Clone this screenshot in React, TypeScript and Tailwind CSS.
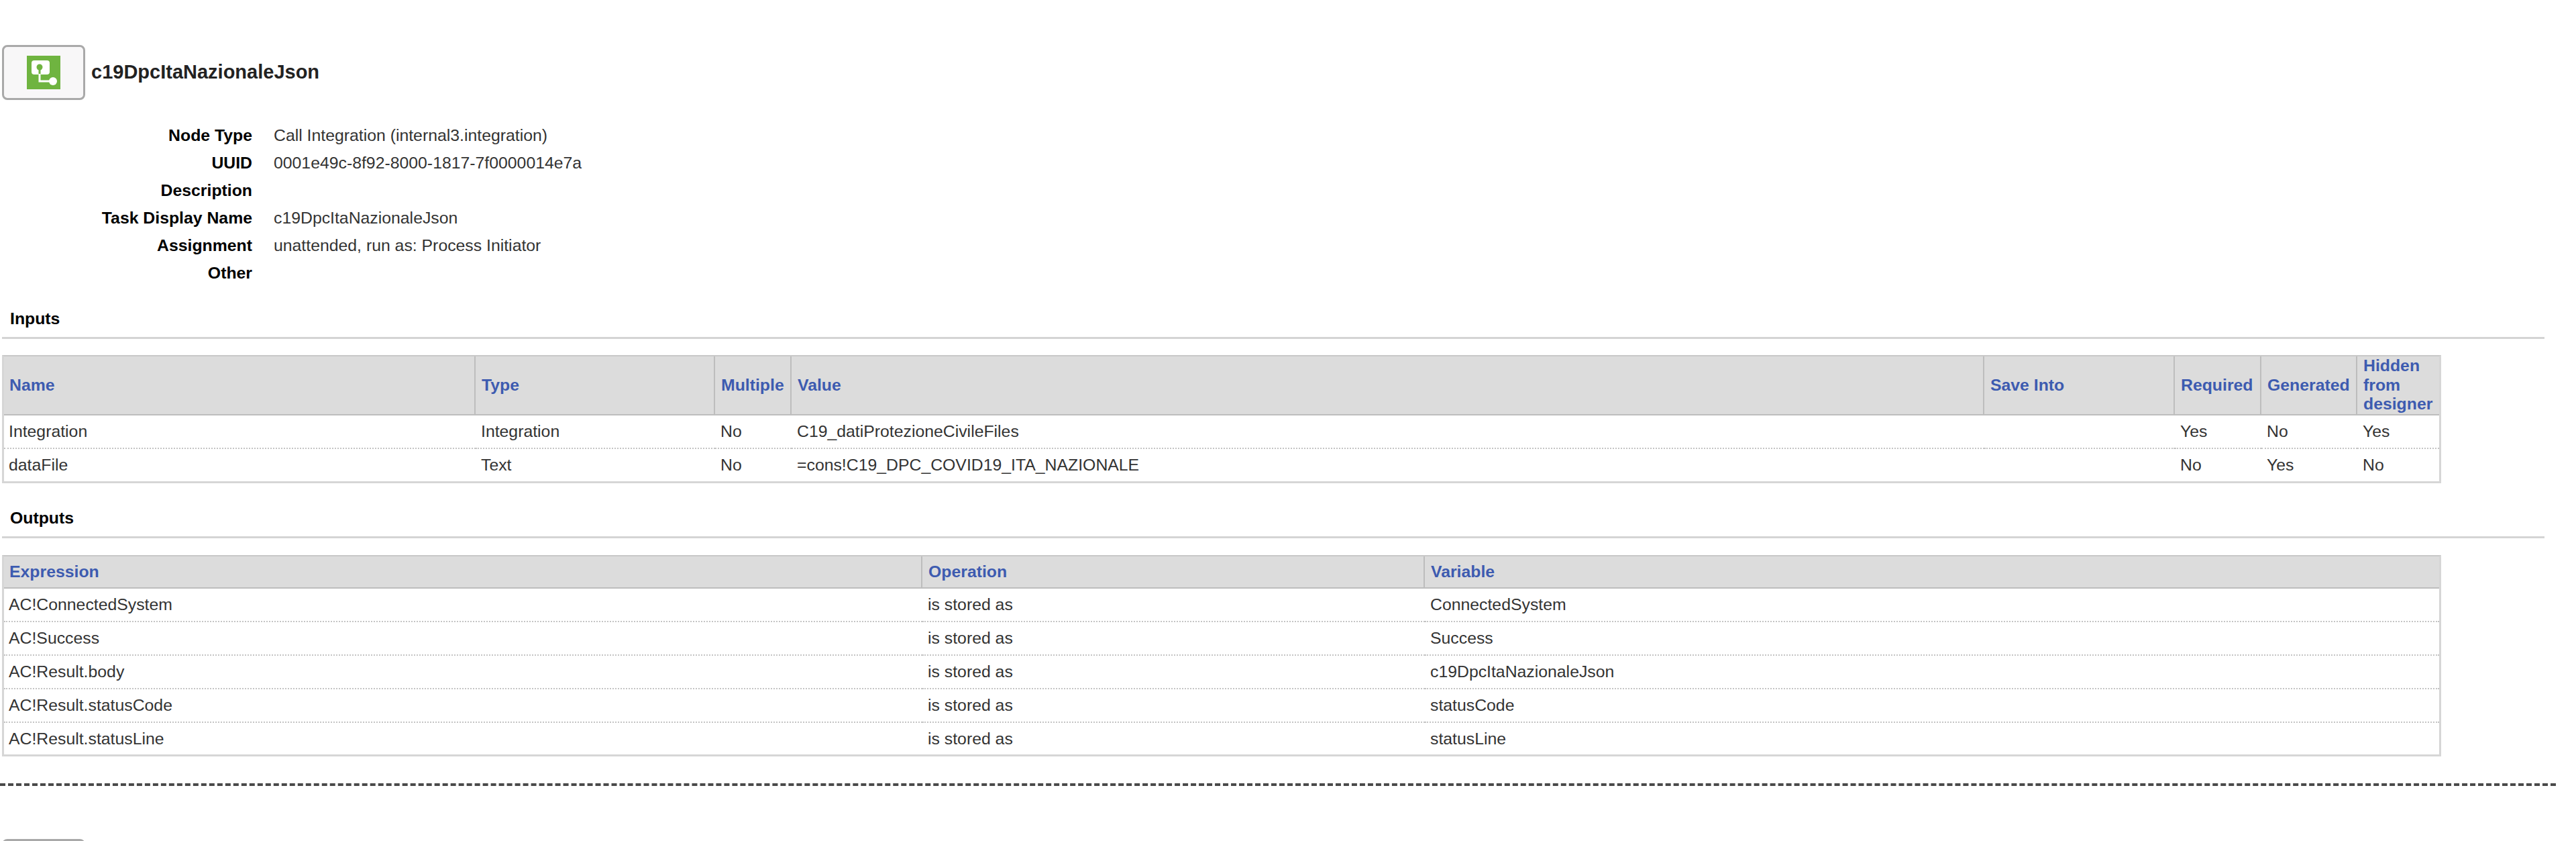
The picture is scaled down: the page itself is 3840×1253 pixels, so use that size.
const details = [
  ["Node Type", "Call Integration (internal3.integration)"],
  ["UUID", "0001e49c-8f92-8000-1817-7f0000014e7a"],
  ["Description", ""],
  ["Task Display Name", "c19DpcItaNazionaleJson"],
  ["Assignment", "unattended, run as: Process Initiator"],
  ["Other", ""],
]

const inputCols = [
  { label: "Name", width: 703 },
  { label: "Type", width: 357 },
  { label: "Multiple", width: 114 },
  { label: "Value", width: 1778 },
  { label: "Save Into", width: 284 },
  { label: "Required", width: 129 },
  { label: "Generated", width: 143 },
  { label: "Hidden from designer", width: 122 },
]

const inputRows = [
  ["Integration", "Integration", "No", "C19_datiProtezioneCivileFiles", "", "Yes", "No", "Yes"],
  ["dataFile", "Text", "No", "=cons!C19_DPC_COVID19_ITA_NAZIONALE", "", "No", "Yes", "No"],
]

const outputCols = [
  { label: "Expression", width: 1369 },
  { label: "Operation", width: 749 },
  { label: "Variable", width: 1512 },
]

const outputRows = [
  ["AC!ConnectedSystem", "is stored as", "ConnectedSystem"],
  ["AC!Success", "is stored as", "Success"],
  ["AC!Result.body", "is stored as", "c19DpcItaNazionaleJson"],
  ["AC!Result.statusCode", "is stored as", "statusCode"],
  ["AC!Result.statusLine", "is stored as", "statusLine"],
]

function NodeButton() {
  return (
    <div className="flex h-[82px] w-[124px] shrink-0 items-center justify-center rounded-[8px] border-[3px] border-[#a9a9a9] bg-[#f8f7f8]">
      <svg width="50" height="50" viewBox="0 0 50 50" aria-hidden>
        <rect width="50" height="50" fill="#6fb440" />
        <rect x="7" y="7" width="27" height="21" rx="4" fill="#fff" />
        <circle cx="19" cy="17" r="4.5" fill="#6fb440" />
        <rect x="17.5" y="18" width="3" height="10" fill="#6fb440" />
        <path d="M19 27v11h20" fill="none" stroke="#fff" strokeWidth="3" />
        <circle cx="39" cy="38" r="6" fill="#fff" />
      </svg>
    </div>
  )
}

function Section({ title, children }: { title: string; children: React.ReactNode }) {
  return (
    <section>
      <h2 className="ml-[15px] h-[42px] text-[24.8px] leading-[30px] font-bold text-black">{title}</h2>
      <div className="ml-[3px] mr-[47px] h-[3px] bg-[#d4d4d4]" />
      {children}
    </section>
  )
}

function DataTable({
  cols,
  rows,
  headHeight,
  lastRowHeight,
}: {
  cols: { label: string; width: number }[]
  rows: string[][]
  headHeight: string
  lastRowHeight: string
}) {
  return (
    <table className="ml-[3px] w-[3636px] table-fixed border-separate border-spacing-0 border-[3px] border-t-2 border-[#d6d6d6] border-t-[#c8c8c8]">
      <colgroup>
        {cols.map((c) => (
          <col key={c.label} style={{ width: c.width }} />
        ))}
      </colgroup>
      <thead>
        <tr className={headHeight}>
          {cols.map((c, i) => (
            <th
              key={c.label}
              className={
                i < cols.length - 1
                  ? "border-r-2 border-b-2 border-[#bdbdbd] bg-[#dcdcdc] pr-2 pl-[9px] text-left text-[24.8px] leading-[28.5px] font-bold text-[#3d5bb0] first:pl-[8px]"
                  : "border-b-2 border-[#bdbdbd] bg-[#dcdcdc] pr-2 pl-[9px] text-left text-[24.8px] leading-[28.5px] font-bold text-[#3d5bb0]"
              }
            >
              {c.label}
            </th>
          ))}
        </tr>
      </thead>
      <tbody>
        {rows.map((row, r) => (
          <tr key={r} className={r < rows.length - 1 ? "h-[50px]" : lastRowHeight}>
            {row.map((cell, i) => (
              <td
                key={i}
                className={
                  r < rows.length - 1
                    ? "border-b-2 border-dotted border-[#c4c4c4] pr-2 pl-[8px] text-[24.8px] text-[#333] first:pl-[7px]"
                    : "pr-2 pl-[8px] text-[24.8px] text-[#333] first:pl-[7px]"
                }
              >
                {cell}
              </td>
            ))}
          </tr>
        ))}
      </tbody>
    </table>
  )
}

export default function App() {
  return (
    <div className="h-[1253px] w-[3840px] overflow-hidden bg-white font-['Liberation_Sans',Arial,sans-serif]">
      <header className="ml-[3px] flex items-center gap-[9px] pt-[67px]">
        <NodeButton />
        <h1 className="text-[29px] font-bold text-[#222]">c19DpcItaNazionaleJson</h1>
      </header>

      <dl className="mt-[32px] grid grid-cols-[376px_1fr] gap-x-[32px] text-[24.8px] leading-[41px]">
        {details.map(([label, value]) => (
          <div key={label} className="contents">
            <dt className="text-right font-bold text-black">{label}</dt>
            <dd className="h-[41px] text-[#333]">{value}</dd>
          </div>
        ))}
      </dl>

      <div className="mt-[33px]">
        <Section title="Inputs">
          <div className="mt-[24px]">
            <DataTable cols={inputCols} rows={inputRows} headHeight="h-[88px]" lastRowHeight="h-[48px]" />
          </div>
        </Section>
      </div>

      <div className="mt-[37px]">
        <Section title="Outputs">
          <div className="mt-[25px]">
            <DataTable cols={outputCols} rows={outputRows} headHeight="h-[48px]" lastRowHeight="h-[47px]" />
          </div>
        </Section>
      </div>

      <div className="mt-[40px] mr-[30px] border-t-[4px] border-dashed border-[#4a4a4a]" />

      <div className="mt-[79px] ml-[3px] h-[82px] w-[124px] rounded-[8px] border-[3px] border-[#a9a9a9] bg-[#f8f7f8]" />
    </div>
  )
}
